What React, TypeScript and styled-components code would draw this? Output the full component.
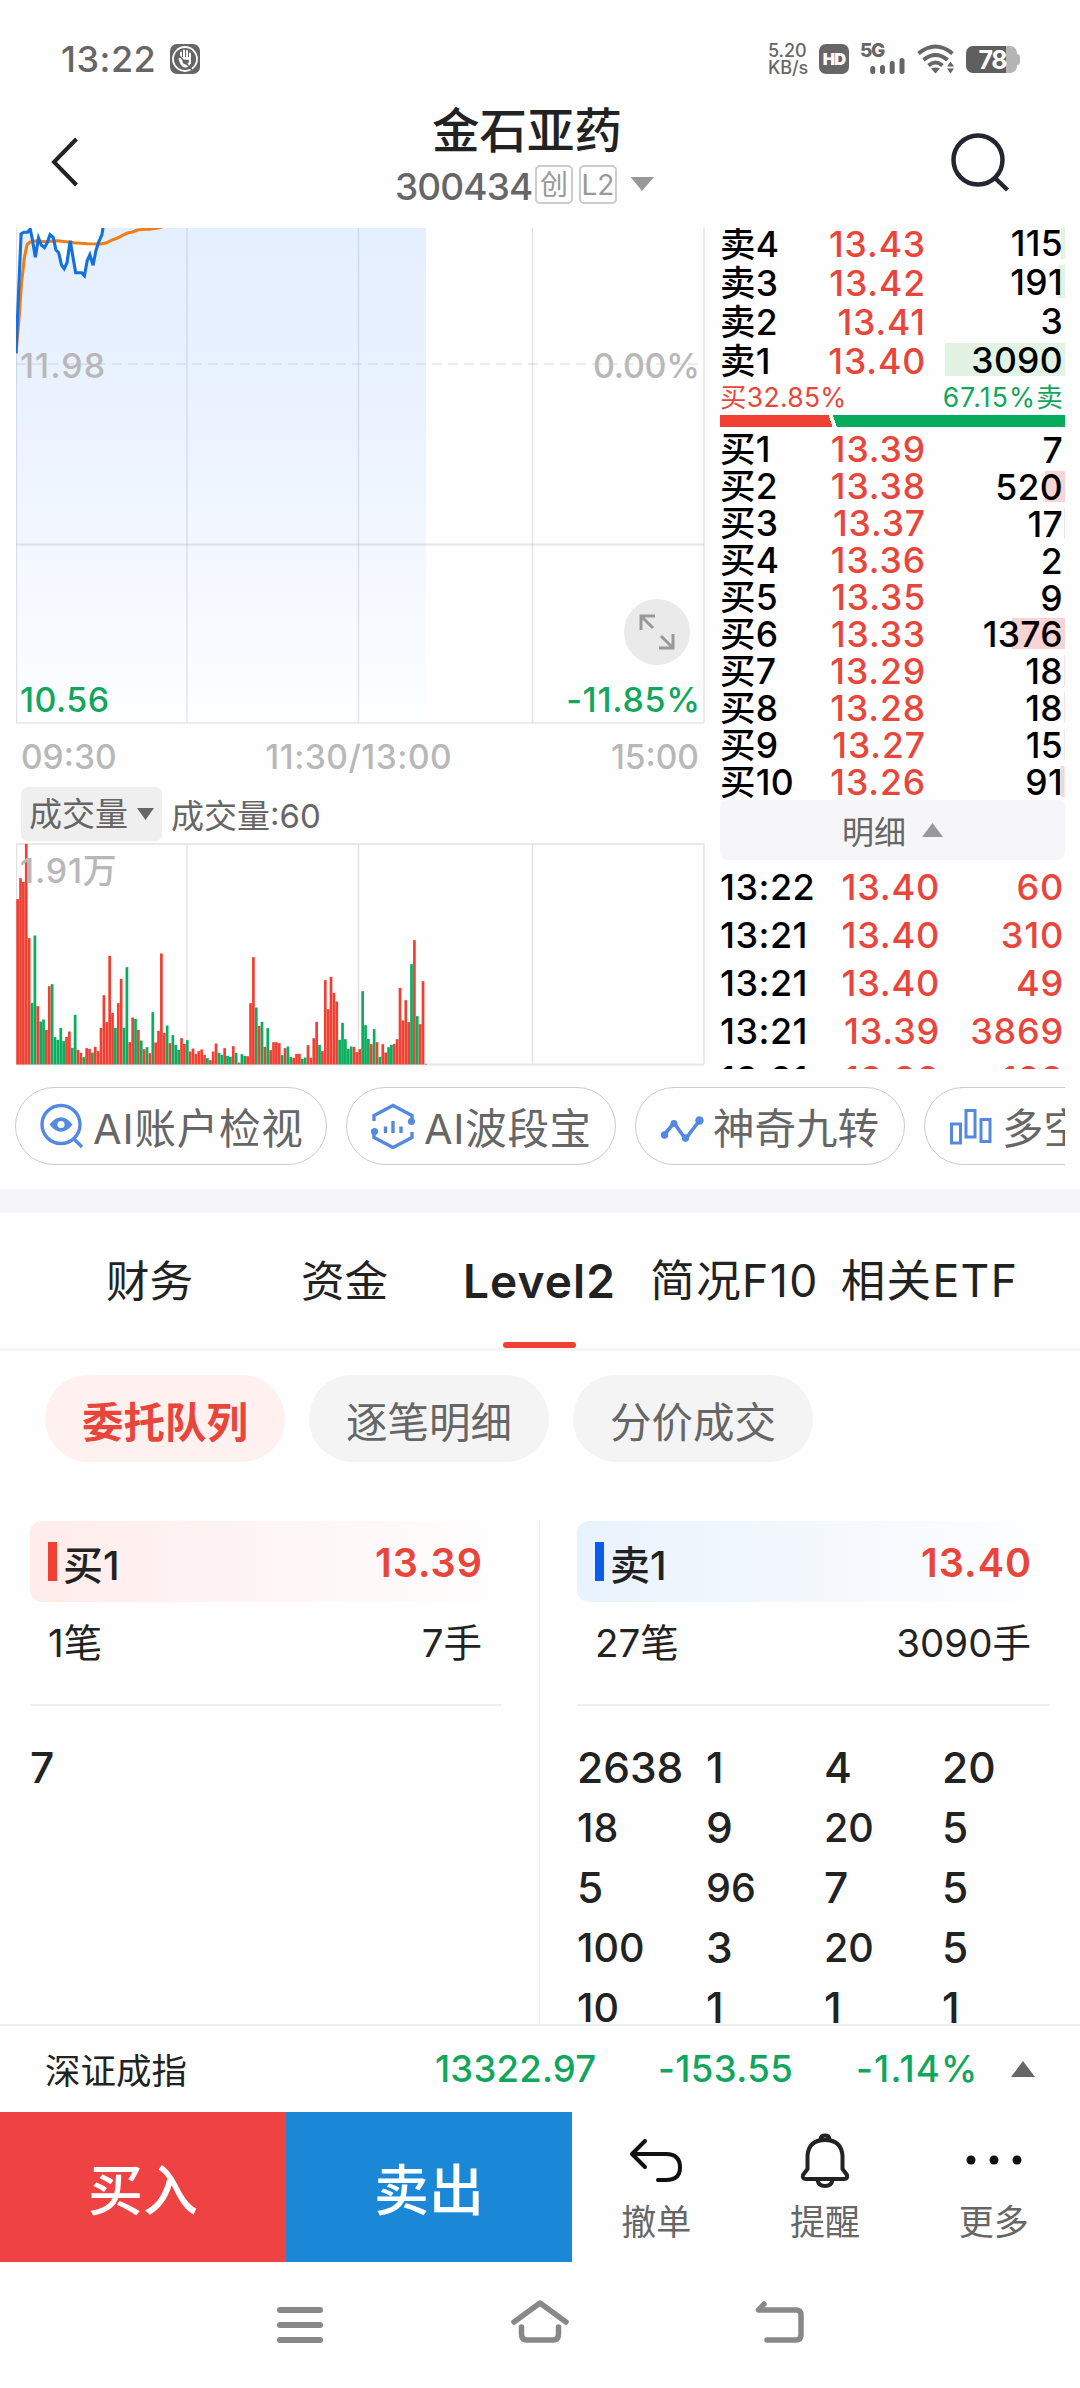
import React from "react";
import styled, { createGlobalStyle } from "styled-components";

const RED = "#e8463b";
const GREEN = "#12a65d";

const GlobalStyle = createGlobalStyle`
  * { box-sizing: border-box; }
  body {
    margin: 0;
    background: #fefefe;
    font-family: Inter, "Noto Sans CJK SC", sans-serif;
    color: #222;
  }
  svg { display: block; flex: none; }
`;

const Screen = styled.div`
  width: 1080px;
  height: 2388px;
  overflow: hidden;
  display: flex;
  flex-direction: column;
  background: #fefefe;
  white-space: nowrap;
`;

/* ---------- status bar ---------- */
const StatusBar = styled.div`
  height: 100px;
  padding: 18px 60px 0 61px;
  display: flex;
  align-items: center;
  color: #666;
`;
const Clock = styled.span`
  font-size: 36px;
  width: 109px;
  font-weight: 500;
  letter-spacing: 0.5px;
`;
const StatusRight = styled.div`
  margin-left: auto;
  display: flex;
  align-items: center;
`;
const Speed = styled.div`
  width: 51px;
  font-size: 18px;
  font-weight: 500;
  line-height: 17px;
  letter-spacing: -0.1px;
`;
const Hd = styled.span`
  width: 30px;
  height: 30px;
  margin-right: 11px;
  border-radius: 7px;
  background: #666;
  color: #fff;
  font-size: 16.5px;
  font-weight: 900;
  line-height: 31px;
  letter-spacing: -0.8px;
  text-align: center;
`;
const Cell = styled.div`
  width: 57px;
  height: 30px;
  position: relative;
  font-size: 19px;
  font-weight: 800;
  line-height: 14px;
  letter-spacing: -1.4px;
  svg { position: absolute; left: 10px; bottom: 0; }
`;
const Battery = styled.div`
  width: 54px;
  height: 27px;
  margin-left: 11px;
  display: flex;
  align-items: center;
`;
const Charge = styled.div`
  width: 51px;
  height: 27px;
  border-radius: 7px;
  background: linear-gradient(90deg, #5f5f5f 0 40px, #b4b4b4 40px);
  color: #fff;
  font-size: 25px;
  font-weight: 700;
  line-height: 28px;
  letter-spacing: -1.5px;
  text-align: right;
  padding-right: 11px;
`;
const Nub = styled.div`
  width: 3px;
  height: 11px;
  border-radius: 0 3px 3px 0;
  background: #b4b4b4;
`;

/* ---------- header ---------- */
const Header = styled.div`
  height: 128px;
  padding: 0 68px 0 50px;
  display: flex;
  justify-content: space-between;
`;
const HeaderIcon = styled.div`
  width: 110px;
  display: flex;
  align-items: flex-start;
  padding-top: ${(p: { $top: number; $end?: boolean }) => p.$top}px;
  justify-content: ${(p) => (p.$end ? "flex-end" : "flex-start")};
`;
const TitleBlock = styled.div`
  display: flex;
  flex-direction: column;
  align-items: center;
  margin-right: 20px;
`;
const Title = styled.div`
  margin-top: 3px;
  height: 56px;
  line-height: 56px;
  font-size: 47.5px;
  font-weight: 500;
  margin-left: 12px;
`;
const Sub = styled.div`
  height: 38px;
  margin-top: 6px;
  margin-left: 7px;
  display: flex;
  align-items: center;
  color: #666;
  font-size: 37px;
  line-height: 44px;
`;
const Code = styled.span`
  width: 140px;
  font-weight: 500;
  letter-spacing: -0.9px;
  padding-top: 5px;
`;
const Badge = styled.span`
  width: 38px;
  height: 39px;
  margin-right: 6px;
  border: 2px solid #ccc;
  border-radius: 5px;
  font-size: 28px;
  line-height: 37px;
  text-align: center;
  color: #999;
`;

/* ---------- quote area ---------- */
const Quote = styled.div`
  height: 842px;
  padding: 0 15px 0 16px;
  display: flex;
  justify-content: space-between;
`;
const ChartCol = styled.div`
  width: 690px;
  display: flex;
  flex-direction: column;
`;
const PricePane = styled.div`
  height: 496px;
  position: relative;
`;
const PaneLabel = styled.span<{ $y: number; $right?: boolean; $green?: boolean; $ls?: number }>`
  position: absolute;
  top: ${(p) => p.$y - 22}px;
  ${(p) => (p.$right ? "right: 6px;" : "left: 4px;")}
  font-size: 34px;
  line-height: 44px;
  letter-spacing: ${(p) => p.$ls ?? 0}px;
  margin-right: ${(p) => -(p.$ls ?? 0)}px;
  font-weight: 500;
  color: ${(p) => (p.$green ? GREEN : "#b8b8b8")};
`;
const Expand = styled.div`
  position: absolute;
  left: 608px;
  top: 371px;
  width: 66px;
  height: 66px;
  border-radius: 50%;
  background: #eaeaea;
  display: flex;
  align-items: center;
  justify-content: center;
`;
const Axis = styled.div`
  height: 63px;
  padding: 2px 7px 0 5px;
  display: flex;
  justify-content: space-between;
  align-items: center;
  font-size: 33.5px;
  font-weight: 500;
  color: #b8b8b8;
`;
const AxisMid = styled.span`
  margin-right: 10px;
  letter-spacing: 0.5px;
`;
const VolHead = styled.div`
  height: 54px;
  padding-left: 5px;
  display: flex;
  align-items: center;
  font-size: 33px;
  color: #666;
`;
const Picker = styled.div`
  width: 141px;
  height: 54px;
  margin-right: 9px;
  padding-left: 8px;
  border-radius: 7px;
  background: #efefef;
  display: flex;
  align-items: center;
  gap: 9px;
  line-height: 54px;
`;
const VolPane = styled.div`
  margin-top: 2px;
  position: relative;
`;

/* ---------- order book ---------- */
const Book = styled.div`
  width: 345px;
  height: 841px;
  overflow: hidden;
  display: flex;
  flex-direction: column;
  color: #000;
  font-weight: 500;
`;
const Asks = styled.div`
  height: 151px;
  flex: none;
  overflow: hidden;
  display: flex;
  flex-direction: column;
  justify-content: flex-end;
`;
const Level = styled.div<{ $h: number }>`
  flex: none;
  height: ${(p) => p.$h}px;
  line-height: ${(p) => p.$h - 4}px;
  display: grid;
  grid-template-columns: 84px 122px 1fr;
  align-items: center;
  font-size: 35.5px;
`;
const Side = styled.span`
  padding-top: 3px;
  letter-spacing: 0.2px;
`;
const Price = styled.span`
  padding-top: 3px;
  text-align: right;
  letter-spacing: 0.9px;
  color: ${RED};
`;
const Qty = styled.span<{ $bar: number; $tint: string; $h: number }>`
  text-align: right;
  height: ${(p) => p.$h}px;
  line-height: ${(p) => p.$h + 3}px;
  padding-right: 2px;
  letter-spacing: 0.3px;
  background: linear-gradient(${(p) => p.$tint}, ${(p) => p.$tint}) right / ${(p) => p.$bar}px 100% no-repeat;
`;
const Ratio = styled.div`
  height: 36px;
  flex: none;
  padding: 0 1px 0 0;
  display: flex;
  justify-content: space-between;
  align-items: center;
  font-size: 26.5px;
  font-weight: 400;
  line-height: 36px;
`;
const RatioText = styled.span<{ $color: string; $ls: number }>`
  color: ${(p) => p.$color};
  letter-spacing: ${(p) => p.$ls}px;
`;
const RatioBar = styled.div`
  height: 12px;
  flex: none;
  margin-bottom: 4px;
  background: linear-gradient(72deg, #ef4033 0 107px, #fff 107px 111px, #06ac5c 111px);
`;
const DetailHead = styled.div`
  flex: none;
  height: 60px;
  margin-bottom: 3px;
  border-radius: 8px;
  background: #f6f6f9;
  display: flex;
  align-items: center;
  justify-content: center;
  gap: 16px;
  font-size: 32px;
  font-weight: 400;
  color: #666;
`;
const Tick = styled.div`
  flex: none;
  height: 48px;
  line-height: 48px;
  display: grid;
  grid-template-columns: 96px 124px 1fr;
  font-size: 36px;
  padding-right: 1px;
`;
const TickTime = styled.span`
  letter-spacing: 0.5px;
`;
const TickNum = styled.span`
  text-align: right;
  letter-spacing: 0.8px;
  color: ${RED};
`;

/* ---------- shortcut chips ---------- */
const Chips = styled.div`
  height: 119px;
  margin: 0 15px;
  padding-top: 17px;
  overflow: hidden;
  display: flex;
  gap: 19px;
`;
const Chip = styled.div<{ $w: number; $ls: number }>`
  flex: none;
  width: ${(p) => p.$w}px;
  height: 78px;
  border: 1.5px solid #ccc;
  border-radius: 39px;
  padding-left: 24px;
  display: flex;
  align-items: center;
  gap: 9px;
  font-size: 41.5px;
  letter-spacing: ${(p) => p.$ls}px;
  color: #666;
`;
const Band = styled.div`
  height: 24px;
  background: #f6f6f9;
`;

/* ---------- tabs ---------- */
const Tabs = styled.div`
  height: 138px;
  padding: 0 52px;
  border-bottom: 3px solid #f5f5f6;
  display: grid;
  grid-template-columns: repeat(5, 195px);
`;
const Tab = styled.div<{ $on?: boolean; $wide?: boolean }>`
  display: flex;
  flex-direction: column;
  align-items: center;
  justify-content: space-between;
  font-size: ${(p) => (p.$on ? 46 : p.$wide ? 44.5 : 43.5)}px;
  font-weight: ${(p) => (p.$on ? 600 : 400)};
  letter-spacing: ${(p) => (p.$on ? 1.1 : p.$wide ? 1.4 : 0)}px;
  line-height: 60px;
  padding-top: 38px;
  margin: 0 -10px;
`;
const Underline = styled.div`
  width: 73px;
  height: 6px;
  border-radius: 3px;
  background: #ef4033;
`;
const Pills = styled.div`
  padding: 24px 45px 0;
  height: 170px;
  display: flex;
  gap: 24px;
`;
const Pill = styled.div<{ $on?: boolean }>`
  width: 240px;
  height: 87px;
  padding-top: 10px;
  border-radius: 44px;
  font-size: 41.5px;
  line-height: 77px;
  text-align: center;
  font-weight: ${(p) => (p.$on ? 700 : 400)};
  color: ${(p) => (p.$on ? RED : "#666")};
  background: ${(p) => (p.$on ? "#fff1f0" : "#f4f4f4")};
`;

/* ---------- queue ---------- */
const Queues = styled.div`
  height: 503px;
  overflow: hidden;
  display: grid;
  grid-template-columns: 540px 540px;
`;
const Queue = styled.div<{ $left?: boolean }>`
  padding: 0 ${(p) => (p.$left ? "38px 0 30px" : "30px 0 37px")};
  ${(p) => p.$left && "border-right: 1px solid #ececec;"}
`;
const QueueHead = styled.div<{ $tint: string }>`
  height: 81px;
  padding: 2px 18px 0 18px;
  border-radius: 12px;
  background: linear-gradient(90deg, ${(p) => p.$tint}, #fefefe);
  display: flex;
  align-items: center;
  font-size: 40px;
  font-weight: 500;
`;
const Marker = styled.i<{ $c: string }>`
  width: 9px;
  height: 39px;
  margin: -2px 6px 0 0;
  background: ${(p) => p.$c};
`;
const QueuePrice = styled.span`
  margin-left: auto;
  font-size: 39.5px;
  font-weight: 600;
  letter-spacing: 1px;
  color: ${RED};
`;
const QueueSum = styled.div`
  height: 104px;
  padding: 0 19px 26px 18px;
  border-bottom: 2px solid #efefef;
  display: flex;
  justify-content: space-between;
  align-items: center;
  font-size: 38.5px;
`;
const Lots = styled.div`
  padding-top: 32px;
  display: grid;
  grid-template-columns: 129px 118px 118px 1fr;
  grid-auto-rows: 60px;
  align-items: center;
`;
const Lot = styled.span<{ $s: number }>`
  font-size: ${(p) => p.$s}px;
  font-weight: 500;
  line-height: 60px;
`;

/* ---------- bottom ---------- */
const IndexBar = styled.div`
  height: 88px;
  border-top: 2px solid #efefef;
  padding: 0 45px;
  display: flex;
  align-items: center;
  font-size: 35.5px;
`;
const IndexName = styled.span`
  width: 390px;
  padding-bottom: 2px;
`;
const IndexNum = styled.span<{ $w: number; $ls: number }>`
  width: ${(p) => p.$w}px;
  font-size: 36.5px;
  font-weight: 500;
  letter-spacing: ${(p) => p.$ls}px;
  color: ${GREEN};
`;
const Actions = styled.div`
  height: 150px;
  display: flex;
`;
const Trade = styled.div<{ $c: string }>`
  width: 286px;
  padding-top: 4px;
  background: ${(p) => p.$c};
  color: #fff;
  font-size: 55px;
  font-weight: 500;
  line-height: 148px;
  text-align: center;
`;
const ActionList = styled.div`
  flex: 1;
  display: grid;
  grid-template-columns: repeat(3, 168.7px);
`;
const Action = styled.div`
  display: flex;
  flex-direction: column;
  align-items: center;
  padding-top: 18px;
  font-size: 35px;
  line-height: 52px;
  color: #666;
  svg { margin-bottom: 6px; }
`;
const NavBar = styled.div`
  height: 126px;
  padding: 34px 272px 0 271px;
  display: flex;
  justify-content: space-between;
`;

/* ---------- data ---------- */
const asks: [string, string, number][] = [
  ["卖4", "13.43", 115],
  ["卖3", "13.42", 191],
  ["卖2", "13.41", 3],
  ["卖1", "13.40", 3090],
];
const bids: [string, string, number][] = [
  ["买1", "13.39", 7],
  ["买2", "13.38", 520],
  ["买3", "13.37", 17],
  ["买4", "13.36", 2],
  ["买5", "13.35", 9],
  ["买6", "13.33", 1376],
  ["买7", "13.29", 18],
  ["买8", "13.28", 18],
  ["买9", "13.27", 15],
  ["买10", "13.26", 91],
];
const ticks = [
  ["13:22", "13.40", "60"],
  ["13:21", "13.40", "310"],
  ["13:21", "13.40", "49"],
  ["13:21", "13.39", "3869"],
  ["13:21", "13.38", "128"],
];
const lots = [
  [2638, 1, 4, 20],
  [18, 9, 20, 5],
  [5, 96, 7, 5],
  [100, 3, 20, 5],
  [10, 1, 1, 1],
];
/* one-minute volumes in thirds of a pixel; a minus sign marks a falling minute */
const volumes = [
  496, 559, 548, 662, 379, -185, -387, 175, -129, -135, 104, 235, -241, -82, -74, -110, -70, 83, 99, -50,
  -149, 44, 35, -22, 49, 47, -36, 53, 40, 110, 208, 127, 326, 155, -110, 184, 257, -110, -292, 67,
  141, -137, 104, -72, 46, -52, 34, -157, 66, 101, 333, 95, -117, 64, -88, -59, -44, 79, 62, -73,
  39, 48, 32, 40, 45, 29, -19, 13, 39, 63, -35, -29, 49, -26, -23, 55, -35, 6, -31, -26,
  25, 184, 322, -171, 116, -128, 53, -109, 43, 67, 67, 64, -28, 49, -54, -23, 20, 32, 32, -17,
  -21, 58, 20, 79, 128, -59, 40, 253, 166, 263, 215, 189, -74, -125, -76, -47, -54, 53, 37, 46,
  -220, -118, -77, 61, -106, 67, -23, 61, 36, -52, -59, 62, 76, 230, 132, 193, 127, -301, 373, -145,
  121, 250, 2,
];
const bluePts: [number, number][] = [
  [34, 400], [40, 200], [45, 42], [51, 37], [59, 37], [65, 27], [70, 60], [76, 112], [83, 54], [89, 75],
  [96, 83], [102, 68], [108, 44], [115, 52], [121, 90], [127, 98], [133, 135], [139, 146], [145, 128],
  [152, 62], [158, 110], [164, 158], [177, 158], [183, 167], [189, 122], [195, 104], [202, 136], [208, 92],
  [214, 66], [221, 44], [226, 0],
];
const orangePts: [number, number][] = [
  [34, 400], [41, 290], [46, 190], [52, 115], [58, 74], [65, 66], [80, 62], [96, 65], [125, 62], [160, 68],
  [190, 71], [218, 72], [232, 68], [243, 60], [254, 55], [266, 46], [277, 39], [288, 36], [299, 30],
  [312, 28], [325, 28], [345, 23], [370, 14],
];
const place = (pts: [number, number][]) =>
  pts.map(([x, y]) => `${(x / 2.178 - 15.6).toFixed(1)},${(y / 3 - 8).toFixed(1)}`).join(" ");

const GRID_X = [0.5, 171, 342.5, 516.5, 688];

const PriceChart = () => (
  <svg width="690" height="496" viewBox="0 0 690 496">
    <defs>
      <linearGradient id="area" x1="0" y1="0" x2="0" y2="1">
        <stop offset="0" stopColor="#e4efff" />
        <stop offset="0.35" stopColor="#eaf2ff" />
        <stop offset="1" stopColor="#fdfeff" />
      </linearGradient>
    </defs>
    <polygon points={`${place(bluePts)} 104,-8 410,-8 410,495 0.5,495`} fill="url(#area)" />
    {GRID_X.map((x) => (
      <line key={x} x1={x} x2={x} y1="0" y2="495" stroke="#8c96aa" strokeOpacity="0.25" strokeWidth="1.4" />
    ))}
    <path d="M0 316.500H688" stroke="#8c96aa" strokeOpacity="0.22" strokeWidth="2" />
    <path d="M0 495H688" stroke="#e6e6e6" strokeWidth="1.500" />
    <path d="M0 136H688" stroke="#8c96aa" strokeOpacity="0.24" strokeWidth="1.600" strokeDasharray="10 6" />
    <polyline points={place(orangePts)} fill="none" stroke="#ee7f16" strokeWidth="3.100" strokeLinejoin="round" />
    <polyline points={place(bluePts)} fill="none" stroke="#1370dc" strokeWidth="3.100" strokeLinejoin="miter" />
  </svg>
);

const VolumeChart = () => (
  <svg width="690" height="223" viewBox="0 0 690 223">
    <path d="M0 1H688M0 221.500H688" stroke="#e8e8e8" strokeWidth="2" />
    {GRID_X.map((x) => (
      <line key={x} x1={x} x2={x} y1="1" y2="221" stroke="#e2e2e2" strokeWidth="1.400" />
    ))}
    {volumes.map((v, i) => (
      <rect
        key={i}
        x={0.3 + i * 2.875}
        y={221.5 - Math.abs(v) / 3}
        width="2.700"
        height={Math.abs(v) / 3}
        fill={v > 0 ? "#ef4033" : "#08ad5d"}
      />
    ))}
  </svg>
);

const Triangle = ({ w, h, up, c }: { w: number; h: number; up?: boolean; c: string }) => (
  <svg width={w} height={h} viewBox="0 0 10 10" preserveAspectRatio="none">
    <path d={up ? "M5 0L10 10H0Z" : "M0 0H10L5 10Z"} fill={c} />
  </svg>
);

const ChipIcon = ({ kind }: { kind: number }) => (
  <svg width="44" height="46" viewBox="0 0 44 46" fill="none" stroke="#5389e0" strokeWidth="3.400">
    {kind === 0 && (
      <>
        <circle cx="21" cy="21.500" r="19" />
        <path d="M33.500 35.500L42 44" />
        <path d="M9.500 21.500Q21 7 32.500 21.500Q21 36 9.500 21.500Z" fill="#5389e0" stroke="none" />
        <circle cx="21" cy="21.500" r="3.600" fill="#fff" stroke="none" />
      </>
    )}
    {kind === 1 && (
      <>
        <path d="M3 18V12.500L22 2.500L41 12.500V18" />
        <path d="M3 29V34.500L22 44.500L41 34.500V29" />
        <path d="M14.500 23.500V30M22 18V30M30 23.500V30" />
        <circle cx="3.500" cy="28.500" r="3.600" fill="#5389e0" stroke="none" />
        <circle cx="40.500" cy="18.500" r="3.600" fill="#5389e0" stroke="none" />
      </>
    )}
    {kind === 2 && (
      <>
        <path d="M4 32L14 20L25.500 36L39.500 17.500" strokeWidth="3.600" />
        <circle cx="4.500" cy="32" r="3.700" fill="#5389e0" stroke="none" />
        <circle cx="14" cy="20.500" r="3.500" fill="#5389e0" stroke="none" />
        <circle cx="25.500" cy="35" r="3.700" fill="#5389e0" stroke="none" />
        <circle cx="39.500" cy="17.500" r="4.200" fill="#5389e0" stroke="none" />
      </>
    )}
    {kind === 3 && <path d="M2.500 21H11.500V40H2.500ZM17 7.500H26V34H17ZM32 16.500H41V38.500H32Z" strokeWidth="3" />}
  </svg>
);

const chips: [string, number, number][] = [
  ["AI账户检视", 312, 0.8],
  ["AI波段宝", 270, 0.7],
  ["神奇九转", 270, 0],
  ["多空趋势", 270, 0],
];

const Rows = ({ rows, h, bar, tint }: { rows: [string, string, number][]; h: number; bar: number; tint: string }) => (
  <>
    {rows.map(([side, price, qty]) => (
      <Level key={side} $h={h}>
        <Side>{side}</Side>
        <Price>{price}</Price>
        <Qty $h={bar} $tint={tint} $bar={Math.max(0.5, (qty / 3090) * 120)}>
          {qty}
        </Qty>
      </Level>
    ))}
  </>
);

const lotSize = (n: number, row: number) => (row === 0 || n < 10 ? 42.5 : 39.5);

export default function App() {
  return (
    <Screen>
      <GlobalStyle />
      <StatusBar>
        <Clock>13:22</Clock>
        <svg width="30" height="30" viewBox="0 0 30 30">
          <rect width="30" height="30" rx="7" fill="#666" />
          <circle cx="15" cy="15" r="12" fill="none" stroke="#fff" strokeWidth="1.800" />
          <path
            d="M11 16V8.500M14 14.500V6.500M17 14.500V7M20 16V9.500M9.500 15L11 19Q13 23 16 22.500Q20 22 20 16M11 14H20V19L16 22L12 20Z"
            fill="#fff"
            stroke="#fff"
            strokeWidth="2"
            strokeLinecap="round"
          />
          <path d="M6 8L22 26" stroke="#666" strokeWidth="1.500" />
        </svg>
        <StatusRight>
          <Speed>
            5.20
            <br />
            KB/s
          </Speed>
          <Hd>HD</Hd>
          <Cell>
            5G
            <svg width="36" height="17" viewBox="0 0 36 17">
              <path
                d="M2.750 14.500V11.500M12.500 14.500V10.500M22.200 14.500V6.500M32 14.500V3.500"
                stroke="#666"
                strokeWidth="5"
                strokeLinecap="round"
              />
            </svg>
          </Cell>
          <svg width="38" height="30" viewBox="0 0 38 30" fill="none" stroke="#666" strokeWidth="4">
            <path d="M1.500 9.500Q18.500 -4.500 35.500 9.500" />
            <path d="M6.500 16Q18.500 6 30.500 16" />
            <path d="M11.500 21.500Q18.500 15.500 25.500 21.500" />
            <path d="M14 24.500Q18.500 22.500 23 24.500L18.500 29.500Z" fill="#666" stroke="none" />
            <path d="M30 22.500L33.500 17.500L37 22.500ZM30 24.500H37L33.500 29.500Z" fill="#666" stroke="none" />
          </svg>
          <Battery>
            <Charge>78</Charge>
            <Nub />
          </Battery>
        </StatusRight>
      </StatusBar>

      <Header>
        <HeaderIcon $top={36}>
          <svg width="30" height="52" viewBox="0 0 30 52">
            <path d="M26.500 3L4 26L26.500 49" fill="none" stroke="#222" strokeWidth="4" />
          </svg>
        </HeaderIcon>
        <TitleBlock>
          <Title>金石亚药</Title>
          <Sub>
            <Code>300434</Code>
            <Badge>创</Badge>
            <Badge>L2</Badge>
            <svg width="31" height="14" viewBox="0 0 31 14">
              <path d="M7.500 0H31L19 14Z" fill="#999" />
            </svg>
          </Sub>
        </TitleBlock>
        <HeaderIcon $top={32} $end>
          <svg width="62" height="62" viewBox="0 0 62 62" fill="none" stroke="#23252f" strokeWidth="4.500">
            <circle cx="28" cy="28" r="24.500" />
            <path d="M45 46L57.500 58" />
          </svg>
        </HeaderIcon>
      </Header>

      <Quote>
        <ChartCol>
          <PricePane>
            <PriceChart />
            <PaneLabel $y={138} $ls={1}>11.98</PaneLabel>
            <PaneLabel $y={138} $right $ls={-0.3}>0.00%</PaneLabel>
            <PaneLabel $y={472} $green $ls={0.4}>10.56</PaneLabel>
            <PaneLabel $y={472} $right $green $ls={0.7}>-11.85%</PaneLabel>
            <Expand>
              <svg width="36" height="36" viewBox="0 0 36 36" fill="none" stroke="#999" strokeWidth="3">
                <path d="M2 16V2H16M2 2L14 14M34 20V34H20M34 34L22 22" />
              </svg>
            </Expand>
          </PricePane>
          <Axis>
            <span>09:30</span>
            <AxisMid>11:30/13:00</AxisMid>
            <span>15:00</span>
          </Axis>
          <VolHead>
            <Picker>
              成交量
              <Triangle w={17} h={12} c="#666" />
            </Picker>
            成交量:60
          </VolHead>
          <VolPane>
            <VolumeChart />
            <PaneLabel $y={28} $ls={0.8}>1.91万</PaneLabel>
          </VolPane>
        </ChartCol>

        <Book>
          <Asks>
            <Rows rows={asks} h={39} bar={33} tint="#e2f2e3" />
          </Asks>
          <Ratio>
            <RatioText $color={RED} $ls={0.3}>买32.85%</RatioText>
            <RatioText $color={GREEN} $ls={1.2}>67.15%卖</RatioText>
          </Ratio>
          <RatioBar />
          <Rows rows={bids} h={36.9} bar={31} tint="#f9d4d3" />
          <DetailHead>
            明细
            <Triangle w={21} h={14} up c="#999" />
          </DetailHead>
          {ticks.map(([t, p, q], i) => (
            <Tick key={i}>
              <TickTime>{t}</TickTime>
              <TickNum>{p}</TickNum>
              <TickNum>{q}</TickNum>
            </Tick>
          ))}
        </Book>
      </Quote>

      <Chips>
        {chips.map(([label, w, ls], i) => (
          <Chip key={label} $w={w} $ls={ls}>
            <ChipIcon kind={i} />
            {label}
          </Chip>
        ))}
      </Chips>
      <Band />

      <Tabs>
        <Tab>财务</Tab>
        <Tab>资金</Tab>
        <Tab $on>
          Level2
          <Underline />
        </Tab>
        <Tab $wide>简况F10</Tab>
        <Tab $wide>相关ETF</Tab>
      </Tabs>
      <Pills>
        <Pill $on>委托队列</Pill>
        <Pill>逐笔明细</Pill>
        <Pill>分价成交</Pill>
      </Pills>

      <Queues>
        <Queue $left>
          <QueueHead $tint="#ffeceb">
            <Marker $c="#ef4033" />
            买1
            <QueuePrice>13.39</QueuePrice>
          </QueueHead>
          <QueueSum>
            <span>1笔</span>
            <span>7手</span>
          </QueueSum>
          <Lots>
            <Lot $s={42.5}>7</Lot>
          </Lots>
        </Queue>
        <Queue>
          <QueueHead $tint="#e9f3fd">
            <Marker $c="#0a5cec" />
            卖1
            <QueuePrice>13.40</QueuePrice>
          </QueueHead>
          <QueueSum>
            <span>27笔</span>
            <span>3090手</span>
          </QueueSum>
          <Lots>
            {lots.map((row, r) =>
              row.map((n, i) => (
                <Lot key={`${r}-${i}`} $s={lotSize(n, r)}>
                  {n}
                </Lot>
              ))
            )}
          </Lots>
        </Queue>
      </Queues>

      <IndexBar>
        <IndexName>深证成指</IndexName>
        <IndexNum $w={223} $ls={0.2}>13322.97</IndexNum>
        <IndexNum $w={198} $ls={0.4}>-153.55</IndexNum>
        <IndexNum $w={155} $ls={1.2}>-1.14%</IndexNum>
        <Triangle w={24} h={16} up c="#666" />
      </IndexBar>
      <Actions>
        <Trade $c="#ef4343">买入</Trade>
        <Trade $c="#1a87d7">卖出</Trade>
        <ActionList>
          <Action>
            <svg width="56" height="60" viewBox="0 0 56 60" fill="none" stroke="#111" strokeWidth="4" strokeLinecap="round" strokeLinejoin="round">
              <path d="M17 11L4 24L17 37M4 24H38Q52 24 52 37.500Q52 50 38 50H30" />
            </svg>
            撤单
          </Action>
          <Action>
            <svg width="56" height="60" viewBox="0 0 56 60" fill="none" stroke="#222" strokeWidth="4" strokeLinejoin="round">
              <path d="M23.500 9Q24 5.500 28 5.500Q32 5.500 32.500 9M10.500 39V26Q11.500 10 28 10Q44.500 10 45.500 26V39L50 45Q51 49 47 49H9Q5 49 6 45ZM20.500 50Q21.500 56 28 56Q34.500 56 35.500 50" />
            </svg>
            提醒
          </Action>
          <Action>
            <svg width="56" height="60" viewBox="0 0 56 60" fill="#111">
              <circle cx="5" cy="30" r="4.500" />
              <circle cx="28" cy="30" r="4.500" />
              <circle cx="51" cy="30" r="4.500" />
            </svg>
            更多
          </Action>
        </ActionList>
      </Actions>

      <NavBar>
        <svg width="56" height="56" viewBox="0 0 56 56" stroke="#888" strokeWidth="6" strokeLinecap="round">
          <path d="M9 14H49M9 29H49M9 44H49" />
        </svg>
        <svg width="62" height="56" viewBox="0 0 62 56" fill="none" stroke="#888" strokeWidth="5.500" strokeLinecap="round" strokeLinejoin="round">
          <path d="M5 26L31 7L57 26M12.500 31V38Q12.500 44 18 44H44Q49.500 44 49.500 38V31" />
        </svg>
        <svg width="56" height="56" viewBox="0 0 56 56" fill="none" stroke="#888" strokeWidth="5.500" strokeLinecap="round" strokeLinejoin="round">
          <path d="M12 8L6.500 14H44Q49 14 49 19V39Q49 44 44 44H15" />
        </svg>
      </NavBar>
    </Screen>
  );
}
